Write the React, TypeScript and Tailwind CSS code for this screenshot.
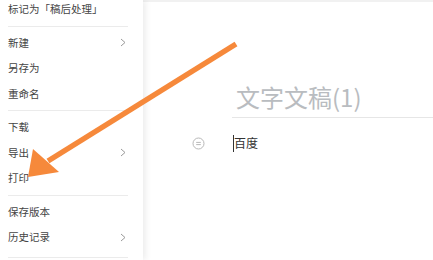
import React from "react";

type Item = { label: string; sub?: boolean } | "divider";

const items: Item[] = [
  { label: "标记为「稿后处理」" },
  "divider",
  { label: "新建", sub: true },
  { label: "另存为" },
  { label: "重命名" },
  "divider",
  { label: "下载" },
  { label: "导出", sub: true },
  { label: "打印" },
  "divider",
  { label: "保存版本" },
  { label: "历史记录", sub: true },
];

function Chevron() {
  return (
    <svg width="6" height="9" viewBox="0 0 6 9" className="shrink-0">
      <path d="M1 1 L5 4.5 L1 8" fill="none" stroke="#9a9a9a" strokeWidth="1" />
    </svg>
  );
}

export default function App() {
  return (
    <div
      className="relative flex h-[260px] w-[433px] overflow-hidden bg-white"
      style={{ fontFamily: '"Noto Sans CJK SC", "Noto Sans", sans-serif' }}
    >
      {/* menu */}
      <div className="relative z-10 w-[143px] shrink-0 bg-white shadow-[3px_0_6px_rgba(0,0,0,0.07)]">
        <div className="mt-[-3.5px]">
          {items.map((it, i) =>
            it === "divider" ? (
              <div key={i} className="mx-[8px] my-[3.5px] h-px w-[120px] bg-[#ebebeb]" />
            ) : (
              <div
                key={i}
                className="flex h-[25.5px] items-center justify-between pl-[8px] pr-[17px] text-[10.5px] text-[#444]"
              >
                <span>{it.label}</span>
                {it.sub && <Chevron />}
              </div>
            )
          )}
          <div className="mx-[8px] mt-[7px] h-px w-[120px] bg-[#ebebeb]" />
        </div>
      </div>

      {/* document */}
      <div className="flex-1 border-t-2 border-[#f1f1f1] bg-white">
        <div className="ml-[89px] mt-[79px] border-b border-[#e6e6e6] pb-[4px] pl-[4px]">
          <div className="h-[32px] text-[24px] leading-[32px] text-[#b9bcc0]">文字文稿(1)</div>
        </div>
        <div className="ml-[49px] mt-[16px] flex h-[18px] items-center">
          <svg width="13" height="13" viewBox="0 0 13 13" className="shrink-0">
            <circle cx="6.5" cy="6.5" r="5.5" fill="none" stroke="#b8b8b8" strokeWidth="1" />
            <path d="M4.2 5.4 H8.8 M4.2 7.6 H8.8" stroke="#b8b8b8" strokeWidth="1" />
          </svg>
          <div className="ml-[28px] h-[17px] w-px bg-[#333]" />
          <span className="text-[12px] text-[#333]">百度</span>
        </div>
      </div>

      {/* annotation arrow */}
      <svg
        className="pointer-events-none absolute left-0 top-0 z-20"
        width="433"
        height="260"
        viewBox="0 0 433 260"
      >
        <line x1="236" y1="44" x2="48" y2="161" stroke="#f6893b" strokeWidth="5.5" />
        <polygon points="33,149 28,177 59,172" fill="#f6893b" />
      </svg>
    </div>
  );
}
